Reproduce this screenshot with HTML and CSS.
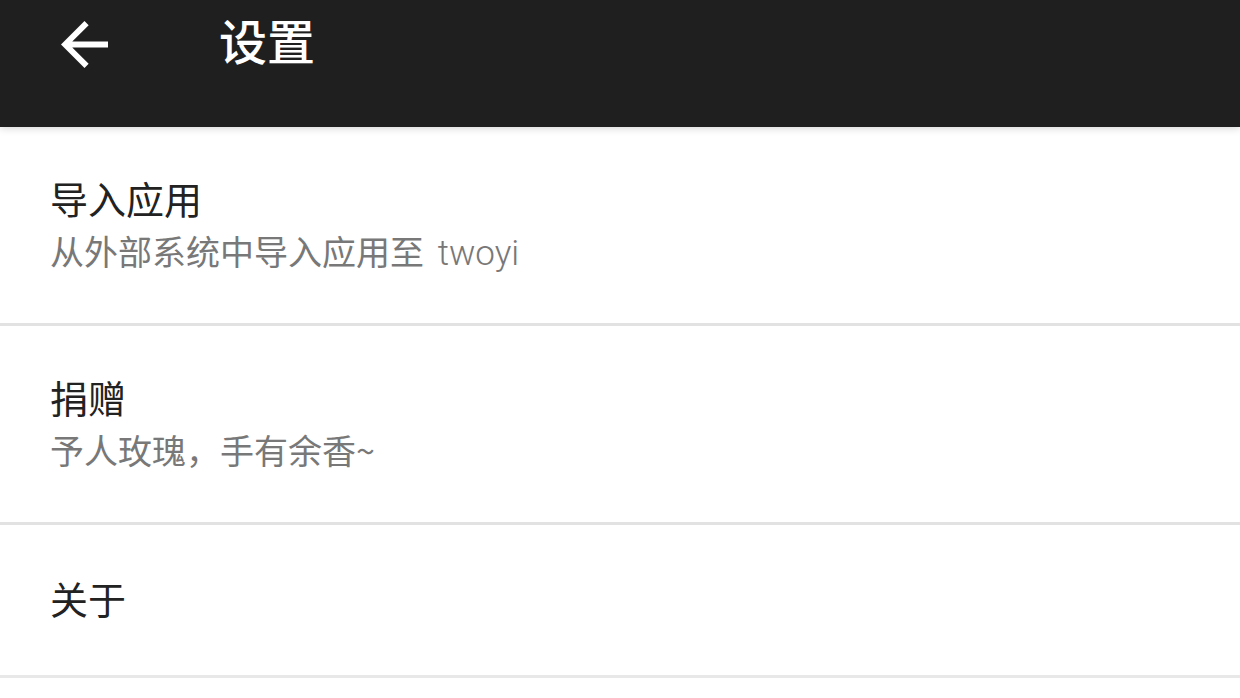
FILE: index.html
```html
<!DOCTYPE html>
<html lang="zh-CN">
<head>
<meta charset="utf-8">
<title>设置</title>
<link rel="stylesheet" href="styles.css">
</head>
<body>
<header class="toolbar">
  <div class="toolbar-row">
    <svg class="back" viewBox="4 4 16 16" width="47" height="47" aria-hidden="true">
      <path d="M20 11H7.83l5.59-5.59L12 4l-8 8 8 8 1.41-1.41L7.83 13H20v-2z" fill="#ffffff"/>
    </svg>
    <h1 class="title">设置</h1>
  </div>
</header>
<main class="list">
  <div class="item two-line">
    <div class="item-title">导入应用</div>
    <div class="item-sub">从外部系统中导入应用至 <span class="latin">twoyi</span></div>
  </div>
  <div class="item two-line">
    <div class="item-title">捐赠</div>
    <div class="item-sub">予人玫瑰，手有余香~</div>
  </div>
  <div class="item one-line last">
    <div class="item-title">关于</div>
  </div>
</main>
</body>
</html>
```

FILE: styles.css
```css
html, body {
  margin: 0;
  padding: 0;
  background: #ffffff;
}
body {
  font-family: "Noto Sans CJK SC", "Noto Sans", sans-serif;
  width: 1240px;
  height: 698px;
  overflow: hidden;
}
.toolbar {
  position: relative;
  z-index: 2;
  height: 127px;
  background: #1f1f1f;
  box-shadow: 0 1px 8px rgba(0, 0, 0, 0.18);
}
.toolbar-row {
  height: 88px;
  display: flex;
  align-items: center;
  padding-left: 61px;
}
.back {
  display: block;
  flex: none;
}
.title {
  margin: 0 0 10px 111px;
  color: #ffffff;
  font-size: 48px;
  font-weight: 500;
  line-height: 56px;
}
.list {
  display: flex;
  flex-direction: column;
}
.item {
  box-sizing: border-box;
  padding-left: 50px;
  border-bottom: 3px solid #e2e2e2;
  display: flex;
  flex-direction: column;
}
.two-line {
  height: 199px;
  padding-top: 47px;
}
.one-line {
  height: 153px;
  justify-content: center;
  padding-bottom: 4px;
}
.last {
  border-bottom-color: #e8e8e8;
}
.item-title {
  color: #222222;
  font-size: 38px;
  line-height: 48px;
}
.item-sub {
  margin-top: 6px;
  color: #787878;
  font-size: 34px;
  line-height: 46px;
}
.latin {
  margin-left: 6px;
  font-family: Roboto, "Noto Sans", sans-serif;
  font-size: 35px;
  font-weight: 300;
}
```
